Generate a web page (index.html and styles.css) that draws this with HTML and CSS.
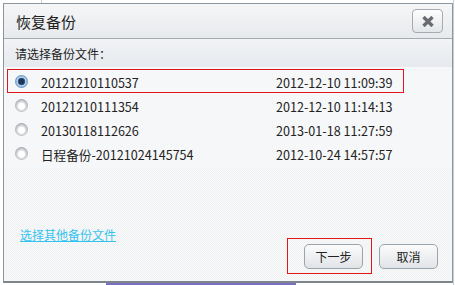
FILE: index.html
```html
<!DOCTYPE html>
<html lang="zh-CN">
<head>
  <meta charset="UTF-8" />
  <title>恢复备份</title>
  <link rel="stylesheet" href="styles.css">
</head>
<body>
  <div class="dialog">
    <div class="titlebar">
      <h2>恢复备份</h2>
      <button class="close" title="关闭">
        <svg width="14" height="11" viewBox="0 0 14 11"><path d="M2.5 1 L11.5 10 M11.5 1 L2.5 10" stroke="#676b70" stroke-width="3.4"/></svg>
      </button>
    </div>

    <div class="prompt">请选择备份文件：</div>

    <div class="list">
      <label class="row selected">
        <span class="radio on"></span>
        <span class="name">20121210110537</span>
        <span class="date">2012-12-10 11:09:39</span>
      </label>
      <label class="row">
        <span class="radio"></span>
        <span class="name">20121210111354</span>
        <span class="date">2012-12-10 11:14:13</span>
      </label>
      <label class="row">
        <span class="radio"></span>
        <span class="name">20130118112626</span>
        <span class="date">2013-01-18 11:27:59</span>
      </label>
      <label class="row">
        <span class="radio"></span>
        <span class="name">日程备份-20121024145754</span>
        <span class="date">2012-10-24 14:57:57</span>
      </label>
    </div>

    <div class="footer">
      <a class="other" href="#">选择其他备份文件</a>
      <div class="actions">
        <div class="focus-box">
          <button class="btn">下一步</button>
        </div>
        <button class="btn">取消</button>
      </div>
    </div>
  </div>
</body>
</html>
```

FILE: styles.css
```css
* {
  box-sizing: border-box;
}

body {
  margin: 0;
  padding: 3px;
  width: 455px;
  height: 285px;
  overflow: hidden;
  font-family: "Noto Sans", "Noto Sans CJK SC", sans-serif;
  font-size: 12px;
  color: #222;
  background:
    linear-gradient(#c9cdd2, #c9cdd2) 41px 0 / 1px 3px no-repeat,
    linear-gradient(#7b6fc4, #7b6fc4) 106px 283px / 190px 2px no-repeat,
    linear-gradient(#c9cdd2, #c9cdd2) 453px 0 / 1px 285px no-repeat,
    #fff;
}

.dialog {
  width: 450px;
  height: 280px;
  border: 1px solid #8d959d;
  border-bottom: 2px solid #7d858d;
  display: flex;
  flex-direction: column;
  background: #f6f7f8;
}

.titlebar {
  height: 35px;
  flex: none;
  display: flex;
  align-items: center;
  justify-content: space-between;
  padding: 0 9px 0 12px;
  border-bottom: 1px solid #a4abb2;
  background: linear-gradient(#f5f6f7, #e7eaed);
}

h2 {
  margin: 0;
  font-family: "Noto Sans CJK SC", sans-serif;
  font-size: 15px;
  font-weight: 400;
  color: #222;
}

.close {
  width: 31px;
  height: 24px;
  padding: 0;
  border: 1px solid #a6abb1;
  border-radius: 4px;
  background: linear-gradient(#fdfdfd, #e3e6e9);
  display: flex;
  align-items: center;
  justify-content: center;
}

.prompt {
  height: 28px;
  flex: none;
  padding: 6px 0 0 11px;
  font-family: "Noto Sans CJK SC", sans-serif;
  background: linear-gradient(#f1f3f5, #e6eaee);
}

.list {
  flex: none;
  padding: 2px 0 4px 3px;
  background: #f6f7f8;
}

.row {
  width: 397px;
  height: 24px;
  display: flex;
  align-items: center;
  padding: 3px 0 0 7px;
  border: 1px solid transparent;
  font-family: "Noto Sans CJK SC", sans-serif;
  font-size: 12.6px;
}

.row + .row {
  margin-top: -1px;
  height: 25px;
}

.row.selected {
  border-color: #e0161b;
  padding-top: 2px;
}

.radio {
  width: 13px;
  height: 13px;
  border-radius: 50%;
  flex: none;
  margin-top: -2px;
  background: radial-gradient(circle at 50% 55%, #ffffff 0 3px, #dfe2e5 4px, #b9bec3 6px, #9ea4aa 7px);
}

.radio.on {
  background: radial-gradient(circle at 50% 50%, #1c3558 0 2.5px, #3c6496 3.5px, #cfe0f2 4.2px, #8fb4dd 5.2px, #5f8fc4 6.5px);
}

.name {
  margin-left: 13px;
  width: 235px;
}

.date {
  flex: none;
}

.footer {
  flex: 1;
  display: flex;
  justify-content: space-between;
  align-items: flex-start;
  padding: 0 14px 0 16px;
  background: repeating-conic-gradient(#eff1f2 0 25%, #f8f9f9 0 50%) 0 0 / 2px 2px;
}

.other {
  margin-top: 58px;
  color: #34c3ef;
  font-family: "Noto Sans CJK SC", sans-serif;
  text-decoration: underline;
  line-height: 16px;
}

.actions {
  margin-top: 69px;
  display: flex;
  align-items: center;
  gap: 7px;
}

.focus-box {
  border: 1px solid #e0161b;
  padding: 5px 8px 4px 16px;
}

.btn {
  width: 59px;
  height: 25px;
  padding: 0;
  border: 1px solid #9ba3ab;
  border-radius: 5px;
  background: linear-gradient(#fbfbfc, #e1e4e7);
  font-family: "Noto Sans CJK SC", sans-serif;
  font-size: 12px;
  color: #222;
}
```
